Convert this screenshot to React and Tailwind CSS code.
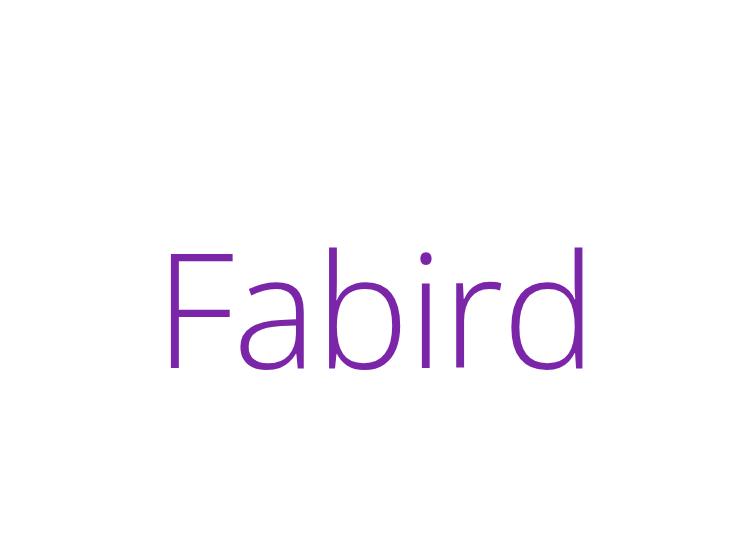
export default function App() {
  return (
    <div className="w-[750px] h-[560px] bg-white flex justify-center pt-[228px]">
      <h1
        className="text-[158px] leading-[158px] font-light tracking-[-1.4px] text-[#7b25a8] m-0"
        style={{ fontFamily: '"Open Sans", sans-serif' }}
      >
        Fabird
      </h1>
    </div>
  );
}
